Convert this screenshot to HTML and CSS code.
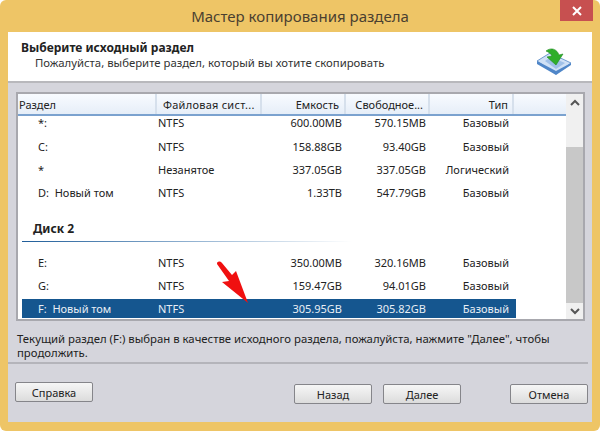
FILE: index.html
```html
<!DOCTYPE html>
<html lang="ru">
<head>
    <meta charset="UTF-8">
    <title>Мастер копирования раздела</title>
    <link rel="stylesheet" href="styles.css">
</head>
<body>
    <div class="window">
        <div class="titlebar">
            <span class="title">Мастер копирования раздела</span>
            <div class="close">
                <svg width="10" height="10" viewBox="0 0 10 10"><path d="M1 1L9 9M9 1L1 9" stroke="#fff" stroke-width="2"/></svg>
            </div>
        </div>
        <div class="client">
            <div class="head">
                <div>
                    <div class="head-title">Выберите исходный раздел</div>
                    <div class="head-sub">Пожалуйста, выберите раздел, который вы хотите скопировать</div>
                </div>
                <svg class="head-icon" width="36" height="30" viewBox="0 0 36 30">
                    <path d="M1 15L14 7L35 17L20 28Z" fill="#cfe0f5" stroke="#6f9bd0"/>
                    <path d="M1 15L20 25L35 17V19L20 29L1 18Z" fill="#4f86c8"/>
                    <path d="M9 15L15 11L29 17L20 23Z" fill="#9fc0e8"/>
                    <path d="M10 5C15 1 21 3 23 9L27 8L20 19L11 11L16 10C15 8 13 6 10 5Z" fill="#2fae2a" stroke="#1f8a1f" stroke-width=".6"/>
                </svg>
            </div>
            <div class="body">
                <div class="listbox">
                    <div class="list">
                        <div class="row header">
                            <div class="cell name">Раздел</div>
                            <div class="cell fs">Файловая сист...</div>
                            <div class="cell num">Емкость</div>
                            <div class="cell num">Свободное...</div>
                            <div class="cell type">Тип</div>
                        </div>
                        <div class="row"><div class="cell name indent">*:</div><div class="cell fs">NTFS</div><div class="cell num">600.00MB</div><div class="cell num">570.15MB</div><div class="cell type">Базовый</div></div>
                        <div class="row"><div class="cell name indent">C:</div><div class="cell fs">NTFS</div><div class="cell num">158.88GB</div><div class="cell num">93.40GB</div><div class="cell type">Базовый</div></div>
                        <div class="row"><div class="cell name indent">*</div><div class="cell fs">Незанятое</div><div class="cell num">337.05GB</div><div class="cell num">337.05GB</div><div class="cell type">Логический</div></div>
                        <div class="row"><div class="cell name indent">D:&nbsp; Новый том</div><div class="cell fs">NTFS</div><div class="cell num">1.33TB</div><div class="cell num">547.79GB</div><div class="cell type">Базовый</div></div>
                        <div class="group">Диск 2</div>
                        <div class="row"><div class="cell name indent">E:</div><div class="cell fs">NTFS</div><div class="cell num">350.00MB</div><div class="cell num">320.16MB</div><div class="cell type">Базовый</div></div>
                        <div class="row"><div class="cell name indent">G:</div><div class="cell fs">NTFS</div><div class="cell num">159.47GB</div><div class="cell num">94.01GB</div><div class="cell type">Базовый</div></div>
                        <div class="row selected"><div class="cell name indent">F:&nbsp; Новый том</div><div class="cell fs">NTFS</div><div class="cell num">305.95GB</div><div class="cell num">305.82GB</div><div class="cell type">Базовый</div></div>
                        <svg class="red-arrow" width="34" height="44" viewBox="0 0 34 44">
                            <path d="M1 3C1 0 4 0 6 2L16 14L20 10L32 42L6 21L13 20Z" fill="#f01010"/>
                        </svg>
                    </div>
                    <div class="scrollbar">
                        <div class="scroll-btn">
                            <svg width="10" height="7" viewBox="0 0 10 7"><path d="M1 6L5 2L9 6" fill="none" stroke="#555" stroke-width="2"/></svg>
                        </div>
                        <div class="scroll-top"></div>
                        <div class="scroll-thumb"></div>
                        <div class="scroll-btn">
                            <svg width="10" height="7" viewBox="0 0 10 7"><path d="M1 1L5 5L9 1" fill="none" stroke="#555" stroke-width="2"/></svg>
                        </div>
                    </div>
                </div>
                <p class="hint">Текущий раздел (F:) выбран в качестве исходного раздела, пожалуйста, нажмите "Далее", чтобы продолжить.</p>
            </div>
            <div class="footer">
                <button class="btn help">Справка</button>
                <div class="nav">
                    <button class="btn">Назад</button>
                    <button class="btn">Далее</button>
                    <button class="btn cancel">Отмена</button>
                </div>
            </div>
        </div>
    </div>
</body>
</html>
```

FILE: styles.css
```css
* {
    box-sizing: border-box;
}
html, body {
    margin: 0;
    padding: 0;
    background: #fff;
}
body {
    width: 600px;
    height: 431px;
    overflow: hidden;
    font-family: 'Noto Sans', sans-serif;
    font-size: 11px;
    color: #222;
}
.window {
    width: 600px;
    height: 431px;
    background: #eec566;
    border-radius: 6px;
    padding: 0 8px 9px 8px;
    display: flex;
    flex-direction: column;
}
.titlebar {
    height: 32px;
    flex: none;
    display: flex;
    justify-content: center;
    align-items: center;
    position: relative;
}
.title {
    font-size: 15px;
    color: #4a4030;
}
.close {
    position: absolute;
    right: -1px;
    top: 0;
    width: 33px;
    height: 21px;
    background: #c75050;
    display: flex;
    justify-content: center;
    align-items: center;
}
.client {
    flex: 1;
    background: #d5d5dc;
    display: flex;
    flex-direction: column;
}
.head {
    height: 51px;
    flex: none;
    background: #fff;
    border-bottom: 2px solid #b8b8bc;
    padding: 8px 20px 0 13px;
    display: flex;
    justify-content: space-between;
}
.head-title {
    font-weight: 700;
    font-size: 12px;
    line-height: 15px;
    color: #222;
}
.head-sub {
    font-size: 11.35px;
    line-height: 15px;
    padding-left: 14px;
    color: #333;
}
.head-icon {
    margin-top: 6px;
}
.body {
    padding: 9px 7px 0 8px;
}
.listbox {
    height: 229px;
    display: flex;
    background: #fff;
    border: 2px solid #a8a8ae;
}
.list {
    flex: 1;
    padding-left: 4px;
    position: relative;
}
.row {
    display: flex;
    width: 494px;
    height: 23.4px;
    align-items: center;
    font-size: 11px;
}
.header {
    height: 22px;
    width: 548px;
    margin-left: -4px;
    padding-left: 4px;
    background: linear-gradient(#f8fbff, #e6eef8);
    border-bottom: 2px solid #7ba2cf;
    margin-bottom: -5px;
}
.header .cell {
    border-right: 2px solid #d6e0ec;
    height: 100%;
    display: flex;
    align-items: center;
}
.header .num {
    justify-content: flex-end;
    padding-right: 5px;
}
.header .type {
    justify-content: flex-end;
    width: 84px;
    padding-right: 4px;
}
.cell {
    white-space: nowrap;
    flex: none;
}
.name {
    width: 134px;
}
.indent {
    padding-left: 16px;
}
.fs {
    width: 105px;
    padding-left: 2px;
}
.num {
    width: 84px;
    padding-right: 3px;
    text-align: right;
}
.type {
    width: 87px;
    padding-right: 7px;
    text-align: right;
}
.header .name {
    padding-left: 0;
    margin-left: -3px;
    width: 138px;
}
.header .fs {
    padding-left: 6px;
    letter-spacing: 0.25px;
}
.group {
    height: 46px;
    padding-top: 16px;
    font-weight: 700;
    font-size: 12px;
    line-height: 16px;
    padding-left: 11px;
    position: relative;
}
.group::after {
    content: "";
    position: absolute;
    left: 0;
    bottom: 9px;
    width: 330px;
    height: 1px;
    background: linear-gradient(to right, #1f5d99, #8fb0d0 50%, #fff);
}
.selected {
    height: 19px;
    margin-top: 2px;
    background: #15568f;
    color: #e8eef5;
}
.red-arrow {
    position: absolute;
    left: 198px;
    top: 167px;
}
.scrollbar {
    width: 17px;
    flex: none;
    background: #f0f0f0;
    display: flex;
    flex-direction: column;
}
.scroll-btn {
    height: 16px;
    flex: none;
    display: flex;
    justify-content: center;
    align-items: center;
}
.scroll-top {
    height: 37px;
    flex: none;
}
.scroll-thumb {
    flex: 1;
    background: #c8c8c8;
}
.hint {
    margin: 11px 0 0 1px;
    font-size: 11.35px;
    line-height: 14px;
    color: #222;
    height: 29px;
}
.footer {
    flex: 1;
    border-top: 2px solid #b4b4ba;
    margin: 1px 4px 0 0;
    padding: 18px 0 0 7px;
    display: flex;
    justify-content: space-between;
    align-items: flex-start;
}
.nav {
    display: flex;
    padding-top: 2px;
}
.btn {
    width: 78px;
    height: 20px;
    padding: 0;
    font-family: 'Noto Sans', sans-serif;
    font-size: 11px;
    color: #222;
    border: 1px solid #85858a;
    border-radius: 2px;
    background: linear-gradient(#f6f6f6, #dcdcdc);
}
.nav .btn {
    margin-left: 11px;
}
.nav .cancel {
    margin-left: 49px;
}
```
